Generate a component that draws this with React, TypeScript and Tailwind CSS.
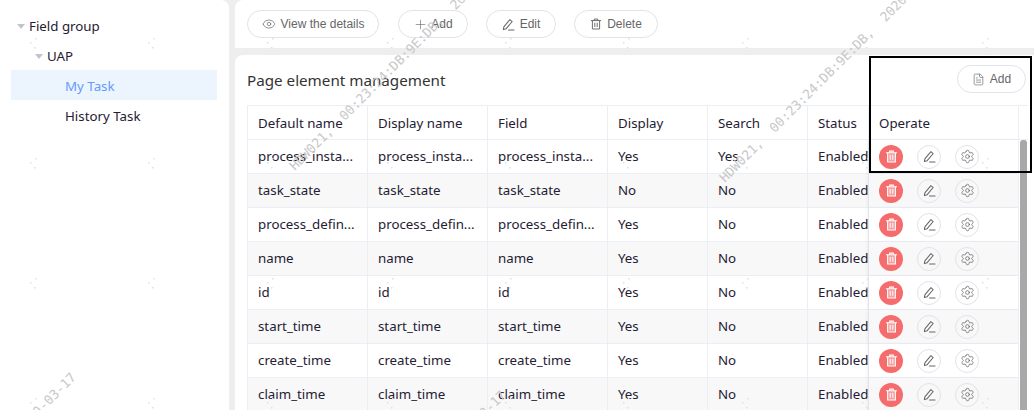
import React from "react";
import { Eye, Plus, FileText, Settings } from "lucide-react";

const rows = [
  ["process_insta...", "process_insta...", "process_insta...", "Yes", "Yes"],
  ["task_state", "task_state", "task_state", "No", "No"],
  ["process_defin...", "process_defin...", "process_defin...", "Yes", "No"],
  ["name", "name", "name", "Yes", "No"],
  ["id", "id", "id", "Yes", "No"],
  ["start_time", "start_time", "start_time", "Yes", "No"],
  ["create_time", "create_time", "create_time", "Yes", "No"],
  ["claim_time", "claim_time", "claim_time", "Yes", "No"],
];

const Caret = () => (
  <svg width="8" height="5" viewBox="0 0 8 5" className="shrink-0">
    <path d="M0 0H8L4 5Z" fill="#c0c4cc" />
  </svg>
);

const PenIcon = ({ size = 14 }: { size?: number }) => (
  <svg width={size} height={size} viewBox="0 0 14 14" fill="none" stroke="currentColor" strokeWidth="1.1">
    <path d="M1.5 12.5 L2 9.5 L8.5 1.8 L11 3.8 L4.5 11.5 Z" strokeLinejoin="round" />
    <path d="M7 13 H13" strokeLinecap="round" />
  </svg>
);

const TrashIcon = ({ size = 14, filled = false }: { size?: number; filled?: boolean }) => (
  <svg width={size} height={size} viewBox="0 0 14 14" fill="none" stroke="currentColor" strokeWidth="1.1">
    <path d="M1.5 3 H12.5" strokeLinecap="round" />
    <path d="M5 3 V1.2 H9 V3" />
    <path d="M2.8 3 V12.8 H11.2 V3" fill={filled ? "rgba(255,255,255,0.35)" : "none"} />
    <path d="M5.6 5.5 V10.5 M8.4 5.5 V10.5" />
  </svg>
);

const Btn = ({ w, icon, label, gap = "gap-[5px]" }: { w: string; icon: React.ReactNode; label: string; gap?: string }) => (
  <button className={`${w} h-[28px] rounded-full border border-[#e1e3ea] bg-white flex items-center justify-center ${gap} text-[12px] text-[#666] font-['Liberation_Sans',sans-serif]`}>
    {icon}
    <span>{label}</span>
  </button>
);

const cellCls = "px-[10px] border-r border-b border-[#ebeef5] h-[34px] overflow-hidden whitespace-nowrap";

const xs: number[] = [33, 151, 270, 390, 508, 626, 745, 865, 985];
const ys: number[] = [45, 165, 285, 405];
const mark = "HDW021,\u00a0\u00a000:23:24:DB:9E:DB,\u00a0\u00a02020-03-17";

const Watermark = () => (
  <svg className="absolute inset-0 pointer-events-none" width="1034" height="410">
    {xs.flatMap((x) =>
      ys.map((y) => (
        <g key={`${x}-${y}`} fill="#e0e0e0">
          <rect x={x - 3} y={y - 3} width="1.5" height="1.5" />
          <rect x={x + 2} y={y - 7} width="1.5" height="1.5" />
          <rect x={x + 1} y={y + 2} width="1.5" height="1.5" />
        </g>
      ))
    )}
    <g fill="#c8c8c8" fontFamily="'DejaVu Sans Mono', monospace" fontSize="13">
      <text transform="translate(295 171) rotate(-45)">{mark}</text>
      <text transform="translate(725 183) rotate(-45)">{mark}</text>
      <text transform="translate(-139 594) rotate(-45)">{mark}</text>
      <text transform="translate(291 612) rotate(-45)">{mark}</text>
    </g>
  </svg>
);

export default function App() {
  return (
    <div className="relative w-[1034px] h-[410px] overflow-hidden bg-[#eeeeee] flex gap-[6px] font-['Noto_Sans',sans-serif] text-[13.3px] text-[#1f2033]">
      <aside className="w-[229px] h-full bg-white rounded-tr-[8px] pt-[10px] pl-[11px] shrink-0">
        <div className="w-[206px] flex flex-col">
          <div className="h-[30px] pt-[3px] flex items-center gap-[4px] pl-[6px]"><Caret />Field group</div>
          <div className="h-[30px] pt-[3px] flex items-center gap-[4px] pl-[24px]"><Caret />UAP</div>
          <div className="h-[30px] pt-[3px] flex items-center pl-[54px] bg-[#ecf4fe] text-[#659cfb]">My Task</div>
          <div className="h-[30px] pt-[3px] flex items-center pl-[54px]">History Task</div>
        </div>
      </aside>
      <main className="flex-1 flex flex-col gap-[7px] min-w-0">
        <div className="h-[48px] bg-white rounded-tl-[8px] pl-[12px] pt-[10px] flex items-start gap-[18px] shrink-0">
          <div className="mr-[1px]"><Btn w="w-[132px]" icon={<Eye size={14} strokeWidth={1.2} />} label="View the details" /></div>
          <Btn w="w-[70px]" icon={<Plus size={15} strokeWidth={1} />} label="Add" gap="gap-[3px]" />
          <Btn w="w-[70px]" icon={<PenIcon size={13} />} label="Edit" />
          <Btn w="w-[84px]" icon={<TrashIcon size={12} />} label="Delete" />
        </div>
        <div className="flex-1 bg-white rounded-tl-[8px] pl-[12px] pr-[7px] pt-[10px]">
          <div className="h-[40px] flex items-start justify-between">
            <h2 className="text-[15.2px] leading-[30px] font-normal text-[#333]">Page element management</h2>
            <div className="mr-[1px]">
              <Btn w="w-[69px]" icon={<FileText size={13} strokeWidth={1.2} />} label="Add" />
            </div>
          </div>
          <table className="table-fixed border-t border-l border-[#ebeef5] w-[780px] border-separate border-spacing-0">
            <colgroup>
              <col className="w-[120px]" />
              <col className="w-[120px]" />
              <col className="w-[120px]" />
              <col className="w-[100px]" />
              <col className="w-[100px]" />
              <col className="w-[61px]" />
              <col className="w-[150px]" />
              <col className="w-[9px]" />
            </colgroup>
            <thead>
              <tr>
                {["Default name", "Display name", "Field", "Display", "Search", "Status", "Operate"].map((h) => (
                  <th key={h} className={`${cellCls} h-[33px] pt-[2px] font-normal text-left`}>{h}</th>
                ))}
                <th className="border-b border-[#ebeef5]" />
              </tr>
            </thead>
            <tbody>
              {rows.map((r, i) => (
                <tr key={i} className={i % 2 ? "bg-[#f8f8f9]" : "bg-white"}>
                  {r.map((c, j) => (
                    <td key={j} className={cellCls}>{c}</td>
                  ))}
                  <td className={`${cellCls} pr-0`}>Enabled</td>
                  <td className={`${cellCls} shadow-[-2px_0_3px_rgba(0,0,0,0.05)]`}>
                    <div className="flex items-center gap-[14px]">
                      <span className="w-[24px] h-[24px] rounded-full bg-[#f56c6c] text-white flex items-center justify-center"><TrashIcon size={13} filled /></span>
                      <span className="w-[24px] h-[24px] rounded-full border border-[#e1e3ea] text-[#666] flex items-center justify-center"><PenIcon size={13} /></span>
                      <span className="w-[24px] h-[24px] rounded-full border border-[#e1e3ea] text-[#666] flex items-center justify-center"><Settings size={15} strokeWidth={1.2} /></span>
                    </div>
                  </td>
                  {i === 0 ? <td rowSpan={8} className="bg-white p-0 relative"><div className="absolute inset-0 bg-[#a8a8a8] rounded-t-[3px] mx-[1px]" /></td> : null}
                </tr>
              ))}
            </tbody>
          </table>
        </div>
      </main>
      <Watermark />
      <div className="absolute left-[869px] top-[56px] w-[163px] h-[117px] border-2 border-black pointer-events-none" />
    </div>
  );
}
